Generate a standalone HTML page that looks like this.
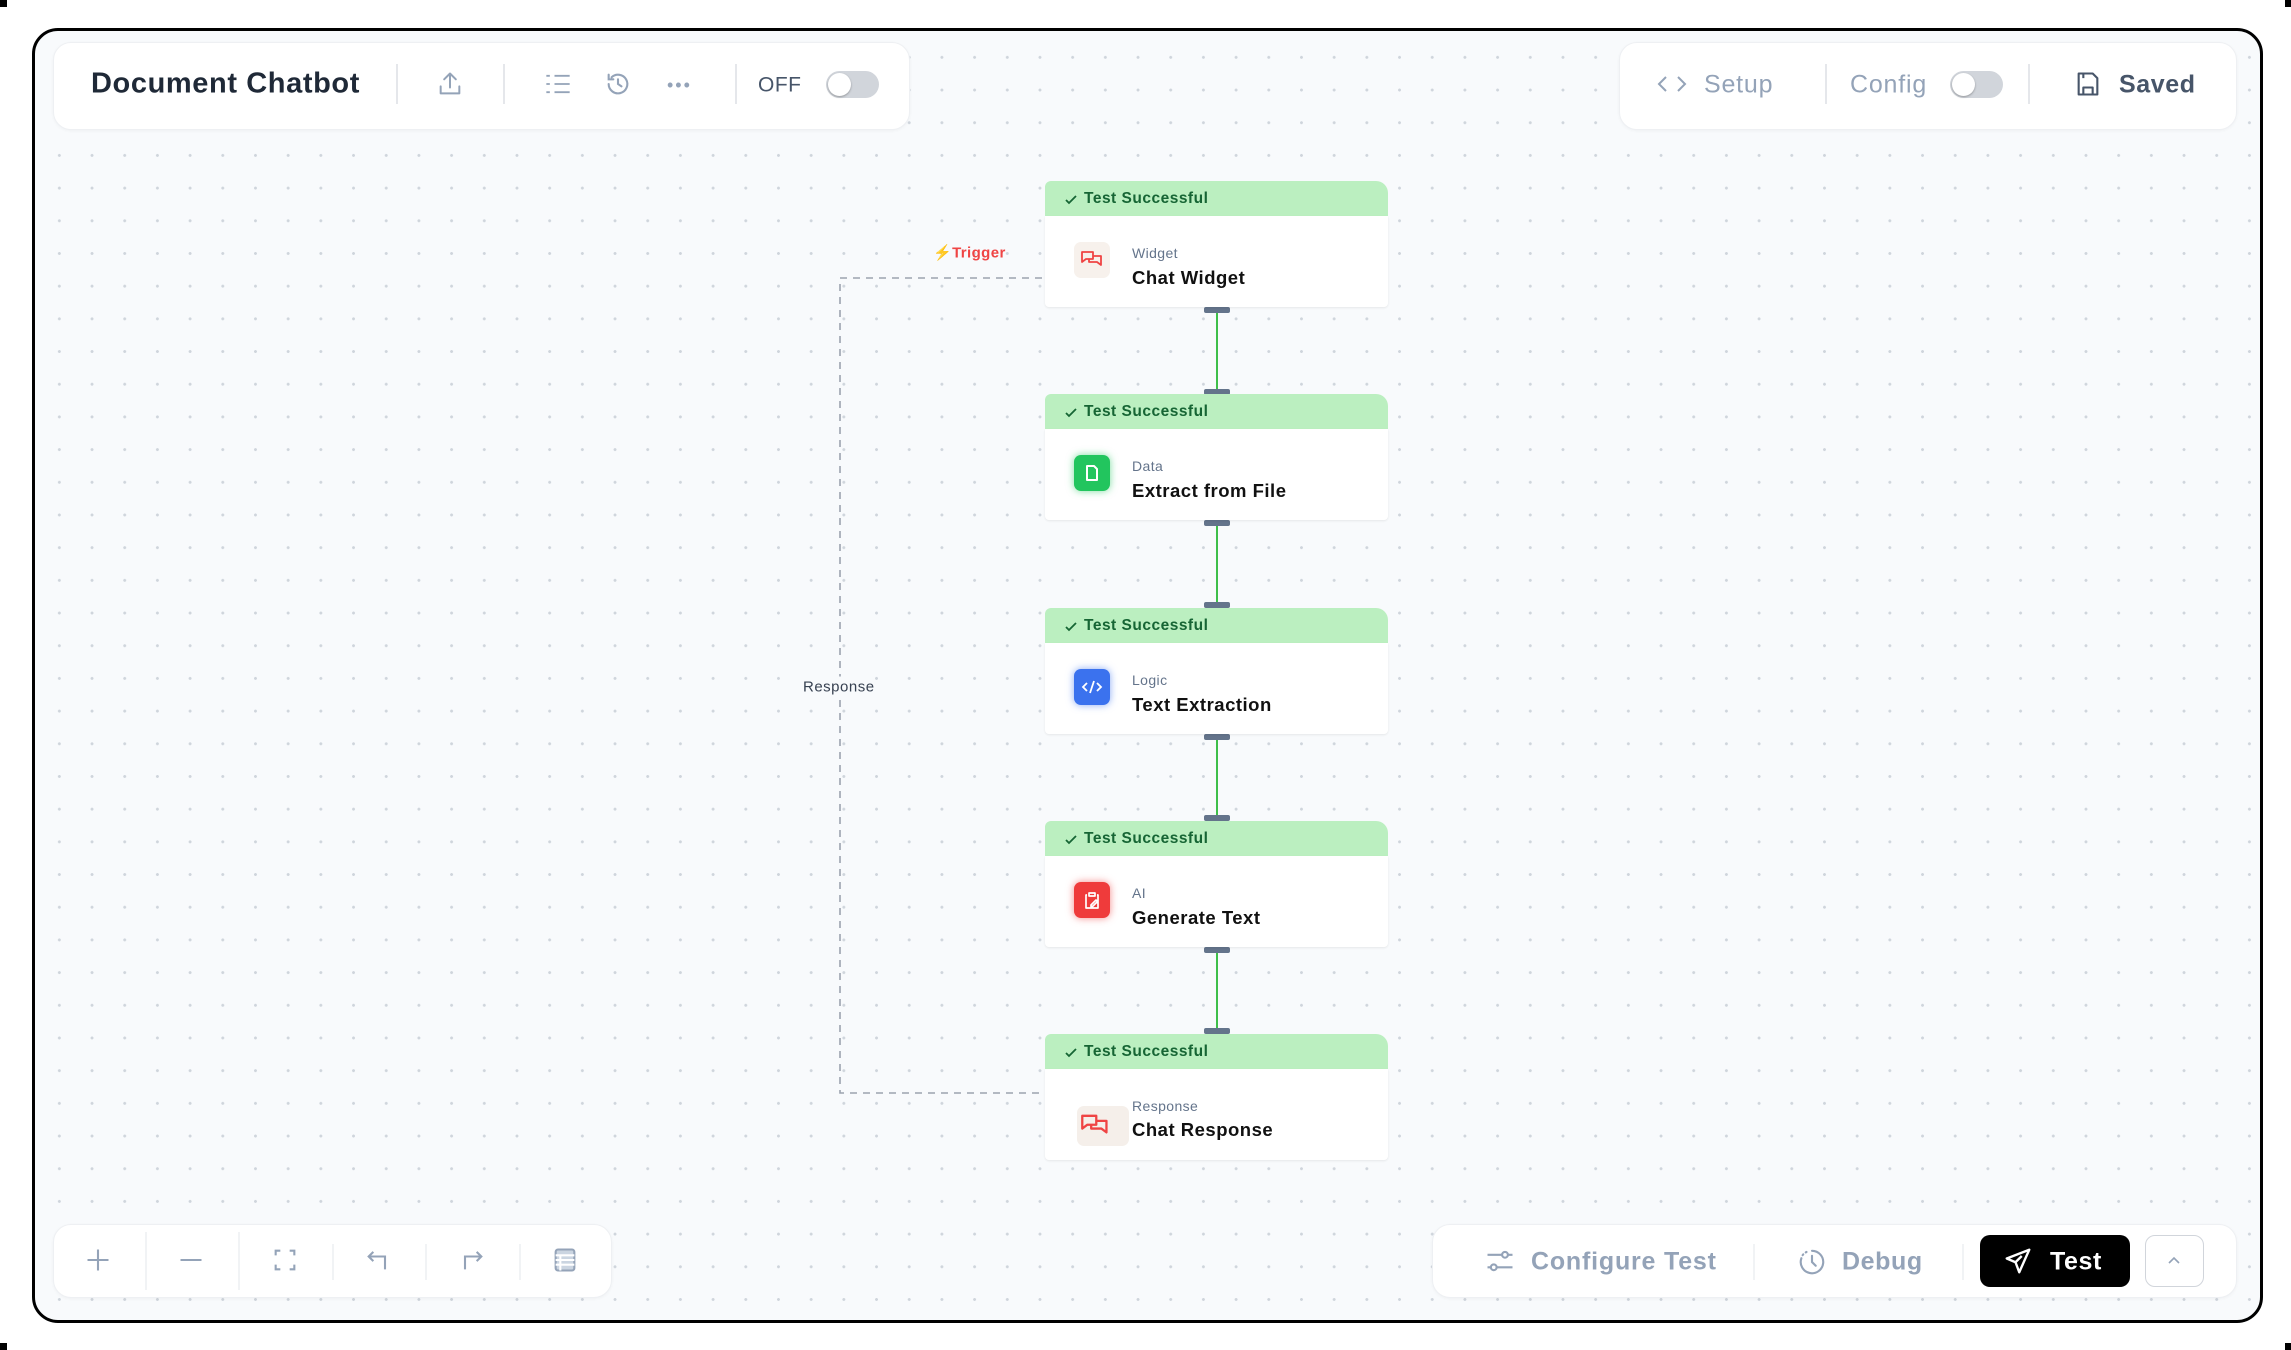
<!DOCTYPE html>
<html><head><meta charset="utf-8"><style>
*{margin:0;padding:0;box-sizing:border-box}
body{width:2291px;height:1350px;background:#fff;position:relative;overflow:hidden;font-family:"Liberation Sans",sans-serif}
.abs{position:absolute}
.frame{left:32px;top:28px;width:2231px;height:1295px;border:3px solid #000;border-radius:26px;background-color:#f8fafc;background-image:radial-gradient(circle,#cfd5dc 1.3px,transparent 1.6px);background-size:32.7px 32.7px;background-position:8px 10px;overflow:hidden}
.panel{background:#fff;border:1px solid #eef0f3;border-radius:18px;box-shadow:0 1px 3px rgba(0,0,0,0.04)}
.div{position:absolute;width:1.5px;background:#e5e7eb}
.t{position:absolute;white-space:nowrap;transform:translateY(-50%);line-height:1}
.toggle{position:absolute;background:#d1d5db;border-radius:14px}
.toggle i{position:absolute;left:2px;top:2px;border-radius:50%;background:#fff;box-shadow:0 1px 2px rgba(0,0,0,.3)}
.node{position:absolute;left:1045px;width:343px;height:126px}
.node .hd{position:absolute;left:0;top:0;width:343px;height:40px;background:#bbefc0;border-radius:6px 12px 0 0}
.node .bd{position:absolute;left:0;top:35px;width:343px;height:91px;background:#fff;border-radius:0 0 4px 4px;box-shadow:0 1px 2px rgba(0,0,0,.08)}
.node .st{position:absolute;left:39px;top:18px;transform:translateY(-50%);font-size:15.5px;font-weight:600;color:#166534;white-space:nowrap;letter-spacing:0.5px}
.node .ck{position:absolute;left:18px;top:11px}
.node .lb{position:absolute;left:87px;top:72px;transform:translateY(-50%);font-size:14px;color:#64748b;letter-spacing:0.4px}
.node .nm{position:absolute;left:87px;top:97px;transform:translateY(-50%);font-size:18.5px;font-weight:600;color:#111;white-space:nowrap;letter-spacing:0.5px}
.node .ic{position:absolute;left:29px;top:61px;width:36px;height:36px;border-radius:7px;display:flex;align-items:center;justify-content:center}
.hdl{position:absolute;left:1204px;width:26px;height:6px;background:#64748b;border-radius:2px}
.ln{position:absolute;left:1216px;width:2px;background:#3fbf4a}
</style></head><body>
<div class="abs" style="left:0;top:0;width:7px;height:7px;background:#000"></div>
<div class="abs" style="left:2285px;top:0;width:6px;height:7px;background:#000"></div>
<div class="abs" style="left:0;top:1343px;width:7px;height:7px;background:#000"></div>
<div class="abs" style="left:2285px;top:1343px;width:6px;height:7px;background:#000"></div>
<div class="abs frame"></div>

<!-- top left panel -->
<div class="abs panel" style="left:53px;top:42px;width:857px;height:88px"></div>
<div class="t" style="left:91px;top:84px;font-size:29px;font-weight:600;color:#1f2937;letter-spacing:0.6px">Document Chatbot</div>
<div class="div" style="left:396px;top:64px;height:40px"></div>
<svg class="abs" style="left:436px;top:70px" width="28" height="28" viewBox="0 0 24 24" fill="none" stroke="#94a3b8" stroke-width="1.7" stroke-linecap="round" stroke-linejoin="round"><path d="M12 15V3M7 8l5-5 5 5M4 14v6h16v-6"/></svg>
<div class="div" style="left:503px;top:64px;height:40px"></div>
<svg class="abs" style="left:544px;top:71px" width="28" height="26" viewBox="0 0 24 22" fill="none" stroke="#94a3b8" stroke-width="1.6"><path d="M2 4h3M2 11h3M2 18h3M9 4h13M9 11h13M9 18h13"/></svg>
<svg class="abs" style="left:604px;top:70px" width="28" height="28" viewBox="0 0 24 24" fill="none" stroke="#94a3b8" stroke-width="1.8" stroke-linecap="round"><path d="M4 12a8 8 0 1 0 2.5-5.8M4 4v4h4M12 8v4l3 2"/></svg>
<div class="t" style="left:667px;top:85px;font-size:18px;color:#94a3b8;letter-spacing:2px">•••</div>
<div class="div" style="left:735px;top:64px;height:40px"></div>
<div class="t" style="left:758px;top:85px;font-size:21px;color:#475569;letter-spacing:0.5px">OFF</div>
<div class="toggle" style="left:826px;top:71px;width:53px;height:27px"><i style="width:23px;height:23px"></i></div>

<!-- top right panel -->
<div class="abs panel" style="left:1619px;top:42px;width:618px;height:88px"></div>
<svg class="abs" style="left:1656px;top:72px" width="32" height="24" viewBox="0 0 32 24" fill="none" stroke="#94a3b8" stroke-width="2"><path d="M10 5l-7 7 7 7M22 5l7 7-7 7"/></svg>
<div class="t" style="left:1704px;top:85px;font-size:25px;color:#94a3b8;letter-spacing:0.8px">Setup</div>
<div class="div" style="left:1825px;top:64px;height:40px"></div>
<div class="t" style="left:1850px;top:85px;font-size:25px;color:#94a3b8;letter-spacing:0.8px">Config</div>
<div class="toggle" style="left:1950px;top:71px;width:53px;height:27px"><i style="width:23px;height:23px"></i></div>
<div class="div" style="left:2028px;top:64px;height:40px"></div>
<svg class="abs" style="left:2074px;top:70px" width="28" height="28" viewBox="0 0 24 24" fill="none" stroke="#475569" stroke-width="1.8" stroke-linejoin="round"><path d="M4 3h12l4 4v14H4zM8 21v-6h8v6M8 3v4"/></svg>
<div class="t" style="left:2119px;top:85px;font-size:25px;font-weight:600;color:#475569;letter-spacing:0.6px">Saved</div>

<!-- dashed line -->
<svg class="abs" style="left:0;top:0" width="2291" height="1350"><path d="M1042 278H840V1093H1042" fill="none" stroke="#9ca3af" stroke-width="1.6" stroke-dasharray="7 6"/></svg>
<div class="t" style="left:933px;top:253px;font-size:15px;color:#ef4444;font-weight:600;letter-spacing:0.4px">⚡Trigger</div>
<div class="t" style="left:803px;top:687px;font-size:15px;color:#374151;background:#f8fafc;padding:3px 0;letter-spacing:0.5px">Response</div>

<!-- connectors -->
<div class="hdl" style="top:307px"></div><div class="ln" style="top:313px;height:76px"></div><div class="hdl" style="top:389px"></div>
<div class="hdl" style="top:520px"></div><div class="ln" style="top:526px;height:76px"></div><div class="hdl" style="top:602px"></div>
<div class="hdl" style="top:734px"></div><div class="ln" style="top:740px;height:75px"></div><div class="hdl" style="top:815px"></div>
<div class="hdl" style="top:947px"></div><div class="ln" style="top:953px;height:75px"></div><div class="hdl" style="top:1028px"></div>

<!-- nodes -->
<div class="node" style="top:181px"><div class="hd"></div><div class="bd"></div>
<svg class="ck" width="16" height="16" viewBox="0 0 16 16"><path d="M3 8l3 3 7-7" fill="none" stroke="#166534" stroke-width="1.8"/></svg>
<div class="st">Test Successful</div>
<div class="ic" style="background:#f7f1ec"><svg width="24" height="22" viewBox="0 0 24 22" fill="none" stroke="#ef4444" stroke-width="1.8" stroke-linejoin="round"><path d="M2 3h11v7H6l-4 3zM9 10v3h8l4 3V7h-8"/></svg></div>
<div class="lb">Widget</div><div class="nm">Chat Widget</div></div>

<div class="node" style="top:394px"><div class="hd"></div><div class="bd"></div>
<svg class="ck" width="16" height="16" viewBox="0 0 16 16"><path d="M3 8l3 3 7-7" fill="none" stroke="#166534" stroke-width="1.8"/></svg>
<div class="st">Test Successful</div>
<div class="ic" style="background:#22c55e;box-shadow:0 0 8px rgba(34,197,94,.6)"><svg width="20" height="20" viewBox="0 0 20 20" fill="none" stroke="#fff" stroke-width="2" stroke-linejoin="round"><path d="M5 3h7l3 3v11H5z"/></svg></div>
<div class="lb">Data</div><div class="nm">Extract from File</div></div>

<div class="node" style="top:608px"><div class="hd"></div><div class="bd"></div>
<svg class="ck" width="16" height="16" viewBox="0 0 16 16"><path d="M3 8l3 3 7-7" fill="none" stroke="#166534" stroke-width="1.8"/></svg>
<div class="st">Test Successful</div>
<div class="ic" style="background:#3b72ee;box-shadow:0 0 8px rgba(59,114,238,.6)"><svg width="22" height="16" viewBox="0 0 22 16" fill="none" stroke="#fff" stroke-width="1.8"><path d="M6 4L2 8l4 4M16 4l4 4-4 4M13 2L9 14"/></svg></div>
<div class="lb">Logic</div><div class="nm">Text Extraction</div></div>

<div class="node" style="top:821px"><div class="hd"></div><div class="bd"></div>
<svg class="ck" width="16" height="16" viewBox="0 0 16 16"><path d="M3 8l3 3 7-7" fill="none" stroke="#166534" stroke-width="1.8"/></svg>
<div class="st">Test Successful</div>
<div class="ic" style="background:#ef3b3b;box-shadow:0 0 8px rgba(239,59,59,.6)"><svg width="20" height="20" viewBox="0 0 20 20" fill="none" stroke="#fff" stroke-width="1.7" stroke-linejoin="round"><path d="M7 3h6v3H7zM5 5H4v13h12V5h-1M9 15l5-5 1.5 1.5-5 5H9z"/></svg></div>
<div class="lb">AI</div><div class="nm">Generate Text</div></div>

<div class="node" style="top:1034px"><div class="hd"></div><div class="bd"></div>
<svg class="ck" width="16" height="16" viewBox="0 0 16 16"><path d="M3 8l3 3 7-7" fill="none" stroke="#166534" stroke-width="1.8"/></svg>
<div class="st">Test Successful</div>
<div class="ic" style="left:32px;top:72px;width:52px;height:40px;background:#f5efea;justify-content:flex-start;padding-left:2px"><svg width="32" height="28" viewBox="0 0 24 22" fill="none" stroke="#ef4444" stroke-width="1.8" stroke-linejoin="round"><path d="M2 3h11v7H6l-4 3zM9 10v3h8l4 3V7h-8"/></svg></div>
<div class="lb" style="top:72px">Response</div><div class="nm" style="top:96px">Chat Response</div></div>

<!-- bottom left panel -->
<div class="abs panel" style="left:53px;top:1224px;width:559px;height:74px"></div>
<svg class="abs" style="left:84px;top:1246px" width="28" height="28" viewBox="0 0 24 24" stroke="#94a3b8" stroke-width="1.8"><path d="M12 3v18M3 12h18"/></svg>
<div class="div" style="left:145px;top:1232px;height:58px;background:#f1f3f5"></div>
<svg class="abs" style="left:177px;top:1246px" width="28" height="28" viewBox="0 0 24 24" stroke="#94a3b8" stroke-width="1.8"><path d="M3 12h18"/></svg>
<div class="div" style="left:238px;top:1232px;height:58px;background:#f1f3f5"></div>
<svg class="abs" style="left:271px;top:1246px" width="28" height="28" viewBox="0 0 24 24" fill="none" stroke="#94a3b8" stroke-width="1.8"><path d="M4 8V4h4M16 4h4v4M20 16v4h-4M8 20H4v-4"/></svg>
<div class="div" style="left:332px;top:1244px;height:36px;background:#f1f3f5"></div>
<svg class="abs" style="left:364px;top:1246px" width="28" height="28" viewBox="0 0 24 24" fill="none" stroke="#94a3b8" stroke-width="1.8"><path d="M8 5L4 9l4 4M4 9h14v11"/></svg>
<div class="div" style="left:425px;top:1244px;height:36px;background:#f1f3f5"></div>
<svg class="abs" style="left:458px;top:1246px" width="28" height="28" viewBox="0 0 24 24" fill="none" stroke="#94a3b8" stroke-width="1.8"><path d="M16 5l4 4-4 4M20 9H6v11"/></svg>
<div class="div" style="left:519px;top:1244px;height:36px;background:#f1f3f5"></div>
<svg class="abs" style="left:551px;top:1246px" width="28" height="28" viewBox="0 0 24 24" fill="none" stroke="#94a3b8" stroke-width="1.8"><rect x="4" y="3" width="16" height="18" rx="2" fill="#cbd5e1"/><path d="M4 8h16M4 12h16M4 16h16M8 8v13" stroke="#fff"/></svg>

<!-- bottom right panel -->
<div class="abs panel" style="left:1432px;top:1224px;width:805px;height:74px"></div>
<svg class="abs" style="left:1485px;top:1247px" width="30" height="28" viewBox="0 0 24 22" fill="none" stroke="#94a3b8" stroke-width="1.7"><path d="M2 6h12M18 6h4M2 16h3M9 16h13"/><circle cx="16" cy="6" r="2.3"/><circle cx="7" cy="16" r="2.3"/></svg>
<div class="t" style="left:1531px;top:1262px;font-size:25px;font-weight:600;color:#94a3b8;letter-spacing:0.8px">Configure Test</div>
<div class="div" style="left:1753px;top:1244px;height:36px;background:#f1f3f5"></div>
<svg class="abs" style="left:1797px;top:1247px" width="30" height="30" viewBox="0 0 24 24" fill="none" stroke="#94a3b8" stroke-width="1.7" stroke-linecap="round"><path d="M12 3a9 9 0 1 1-8.5 6" /><path d="M4.5 6.5l.5-.6M7 4.3l.6-.3" /><path d="M12 7v5l3 3"/></svg>
<div class="t" style="left:1842px;top:1262px;font-size:25px;font-weight:600;color:#94a3b8;letter-spacing:0.6px">Debug</div>
<div class="div" style="left:1962px;top:1244px;height:36px;background:#f1f3f5"></div>
<div class="abs" style="left:1980px;top:1235px;width:150px;height:52px;background:#000;border-radius:10px"></div>
<svg class="abs" style="left:2003px;top:1246px" width="30" height="30" viewBox="0 0 24 24" fill="none" stroke="#fff" stroke-width="1.9" stroke-linejoin="round"><path d="M21 3L3 10l7 3 3 8zM10 13l5-5"/></svg>
<div class="t" style="left:2050px;top:1262px;font-size:25px;font-weight:600;color:#fff;letter-spacing:0.6px">Test</div>
<div class="abs" style="left:2145px;top:1235px;width:59px;height:52px;border:1.5px solid #d1d5db;border-radius:10px;background:#fff"></div>
<svg class="abs" style="left:2165px;top:1252px" width="18" height="18" viewBox="0 0 18 18" fill="none" stroke="#94a3b8" stroke-width="1.6"><path d="M4 11l5-5 5 5"/></svg>
</body></html>
